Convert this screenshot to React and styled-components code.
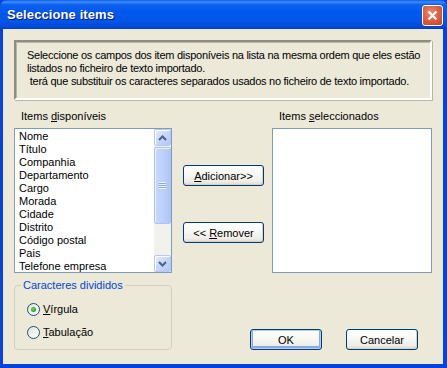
import React from 'react'
import styled, {createGlobalStyle} from 'styled-components'

const GlobalStyle = createGlobalStyle`
    html, body{
        margin: 0;
        padding: 0;
        background: #ECE9D8;
    }
    body{
        font-family: "Liberation Sans", Arial, sans-serif;
        font-size: 11px;
        color: #000;
    }
`

const available = [
    'Nome', 'Título', 'Companhia', 'Departamento', 'Cargo', 'Morada',
    'Cidade', 'Distrito', 'Código postal', 'Pais', 'Telefone empresa',
]

const infoLines = [
    'Seleccione os campos dos item disponíveis na lista na mesma ordem que eles estão',
    'listados no ficheiro de texto importado.',
    '\u00a0terá que substituir os caracteres separados usados no ficheiro de texto importado.',
]

function Chevron({up}){
    return(
        <svg width="9" height="6" viewBox="0 0 9 6">
            <path d={up ? 'M1 5 L4.5 1.5 L8 5' : 'M1 1 L4.5 4.5 L8 1'} fill="none" stroke="#4D6185" strokeWidth="2"/>
        </svg>
    )
}

function App(){
    return(
        <Window>
            <GlobalStyle/>
            <TitleBar>
                <Title>Seleccione items</Title>
                <CloseButton>
                    <svg width="11" height="11" viewBox="0 0 11 11">
                        <path d="M1.5 1.5 L9.5 9.5 M9.5 1.5 L1.5 9.5" stroke="#fff" strokeWidth="2.2"/>
                    </svg>
                </CloseButton>
            </TitleBar>
            <Body>
                <InfoBox>
                    {infoLines.map((line, i) => <InfoLine key={i}>{line}</InfoLine>)}
                </InfoBox>
                <Middle>
                    <Column>
                        <Label>Items <u>d</u>isponíveis</Label>
                        <ListBox>
                            <Items>
                                {available.map(item => <Item key={item}>{item}</Item>)}
                            </Items>
                            <ScrollBar>
                                <ScrollButton><Chevron up/></ScrollButton>
                                <Track>
                                    <Thumb>
                                        <Grip/>
                                    </Thumb>
                                </Track>
                                <ScrollButton><Chevron/></ScrollButton>
                            </ScrollBar>
                        </ListBox>
                    </Column>
                    <MoveButtons>
                        <Button $width={81}><span><u>A</u>dicionar&gt;&gt;</span></Button>
                        <Button $width={81}><span>&lt;&lt; <u>R</u>emover</span></Button>
                    </MoveButtons>
                    <Column>
                        <Label>Items <u>s</u>eleccionados</Label>
                        <ListBox/>
                    </Column>
                </Middle>
                <Bottom>
                    <GroupBox>
                        <Legend>Caracteres divididos</Legend>
                        <Radio><RadioCircle $checked/><span><u>V</u>írgula</span></Radio>
                        <Radio><RadioCircle/><span><u>T</u>abulação</span></Radio>
                    </GroupBox>
                    <DialogButtons>
                        <Button $width={72} $default>OK</Button>
                        <Button $width={72}>Cancelar</Button>
                    </DialogButtons>
                </Bottom>
            </Body>
        </Window>
    )
}
export default App

const Window = styled.div`
    width: 447px;
    height: 368px;
    display: flex;
    flex-direction: column;
    background: #0842DC;
`

const TitleBar = styled.div`
    height: 29px;
    flex: none;
    display: flex;
    align-items: center;
    justify-content: space-between;
    padding: 0 4px 0 7px;
    border-radius: 7px 7px 0 0;
    background: linear-gradient(to bottom, #0A5DEA 0%, #3E8CF6 7%, #0D62EE 16%, #0058EE 40%, #0055E6 75%, #0049D8 92%, #003AC8 100%);
`

const Title = styled.span`
    color: #fff;
    font-weight: bold;
    font-size: 13px;
    letter-spacing: 0.1px;
    text-shadow: 1px 1px 0 #0A1883;
`

const CloseButton = styled.div`
    width: 19px;
    height: 19px;
    border: 1px solid #fff;
    border-radius: 3px;
    display: flex;
    align-items: center;
    justify-content: center;
    background: radial-gradient(circle at 40% 35%, #E98A70 0%, #DD5A3C 55%, #C8411F 100%);
    margin-top: 1px;
`

const Body = styled.div`
    flex: 1;
    background: #ECE9D8;
    border-style: solid;
    border-color: #0842DC;
    border-width: 0 4px 4px 3px;
    padding: 11px 11px 0 11px;
`

const InfoBox = styled.div`
    height: 60px;
    box-sizing: border-box;
    border: 2px solid;
    border-color: #8E8C84 #FFFFFF #FFFFFF #8E8C84;
    box-shadow: inset 1px 1px 0 #B8B6A8, 1px 1px 0 #B8B6A8;
    padding: 7px 4px 0 11px;
    overflow: hidden;
`

const InfoLine = styled.div`
    line-height: 13px;
    white-space: nowrap;
    letter-spacing: -0.26px;
`

const Middle = styled.div`
    display: grid;
    grid-template-columns: 158px 81px 157px;
    column-gap: 11px;
    margin-top: 10px;
    width: 415px;
    & > :nth-child(3){
        margin-left: -3px;
    }
`

const Column = styled.div`
    display: flex;
    flex-direction: column;
`

const Label = styled.div`
    line-height: 13px;
    padding-left: 7px;
    margin-bottom: 5px;
`

const ListBox = styled.div`
    height: 145px;
    box-sizing: border-box;
    border: 1px solid #7F9DB9;
    background: #fff;
    display: flex;
`

const Items = styled.div`
    flex: 1;
    padding: 1px 0 0 4px;
`

const Item = styled.div`
    line-height: 13px;
    white-space: nowrap;
`

const ScrollBar = styled.div`
    width: 17px;
    display: flex;
    flex-direction: column;
    background: #F3F1EC;
`

const ScrollButton = styled.div`
    height: 17px;
    box-sizing: border-box;
    border: 1px solid #B7C8F2;
    border-radius: 2px;
    background: linear-gradient(135deg, #E4ECFE 0%, #C6D6FC 50%, #B3C7F6 100%);
    box-shadow: inset 1px 1px 0 #fff;
    display: flex;
    align-items: center;
    justify-content: center;
`

const Track = styled.div`
    flex: 1;
    padding-top: 1px;
`

const Thumb = styled.div`
    height: 77px;
    box-sizing: border-box;
    border: 1px solid #AEC3F1;
    border-radius: 2px;
    background: linear-gradient(to right, #C9D8FC 0%, #BCCFFB 60%, #B0C6F8 100%);
    box-shadow: inset 1px 1px 0 #EAF0FE;
    display: flex;
    align-items: center;
    justify-content: center;
`

const Grip = styled.div`
    width: 7px;
    height: 7px;
    background: repeating-linear-gradient(to bottom, #EEF4FE 0px, #EEF4FE 1px, #8BA9E6 1px, #8BA9E6 2px);
`

const MoveButtons = styled.div`
    display: flex;
    flex-direction: column;
    gap: 36px;
    padding-top: 55px;
`

const Button = styled.div`
    width: ${p => p.$width}px;
    height: 21px;
    box-sizing: border-box;
    border: 1px solid #003C74;
    border-radius: 3px;
    display: flex;
    align-items: center;
    justify-content: center;
    background: linear-gradient(to bottom, #FFFFFF 0%, #F8F8F5 40%, #EFEEE8 80%, #DCDAD0 100%);
    box-shadow: ${p => p.$default
        ? 'inset 0 0 0 1px #B5CCF5, inset 0 -1px 0 2px #8AA8E8'
        : 'inset -1px -1px 0 #D6D0C5'};
    white-space: pre;
`

const Bottom = styled.div`
    display: flex;
    align-items: flex-end;
    margin-top: 6px;
`

const GroupBox = styled.fieldset`
    width: 158px;
    height: 71px;
    box-sizing: border-box;
    margin: 0;
    padding: 11px 0 0 12px;
    border: 1px solid #D0D0BF;
    border-radius: 4px;
    display: flex;
    flex-direction: column;
    gap: 10px;
`

const Legend = styled.legend`
    color: #0046D5;
    padding: 0 2px;
    margin-left: -6px;
    line-height: 13px;
`

const Radio = styled.label`
    display: flex;
    align-items: center;
    gap: 3px;
    line-height: 13px;
`

const RadioCircle = styled.span`
    width: 13px;
    height: 13px;
    box-sizing: border-box;
    border-radius: 50%;
    border: 1px solid #1C5180;
    background: linear-gradient(135deg, #DCDCD7 0%, #F2F2EF 50%, #FFFFFF 100%);
    display: flex;
    align-items: center;
    justify-content: center;
    &::after{
        content: '';
        display: ${p => p.$checked ? 'block' : 'none'};
        width: 5px;
        height: 5px;
        border-radius: 50%;
        background: radial-gradient(circle at 40% 40%, #6FD36F 0%, #21A121 70%);
    }
`

const DialogButtons = styled.div`
    display: flex;
    gap: 24px;
    margin-left: 78px;
`
